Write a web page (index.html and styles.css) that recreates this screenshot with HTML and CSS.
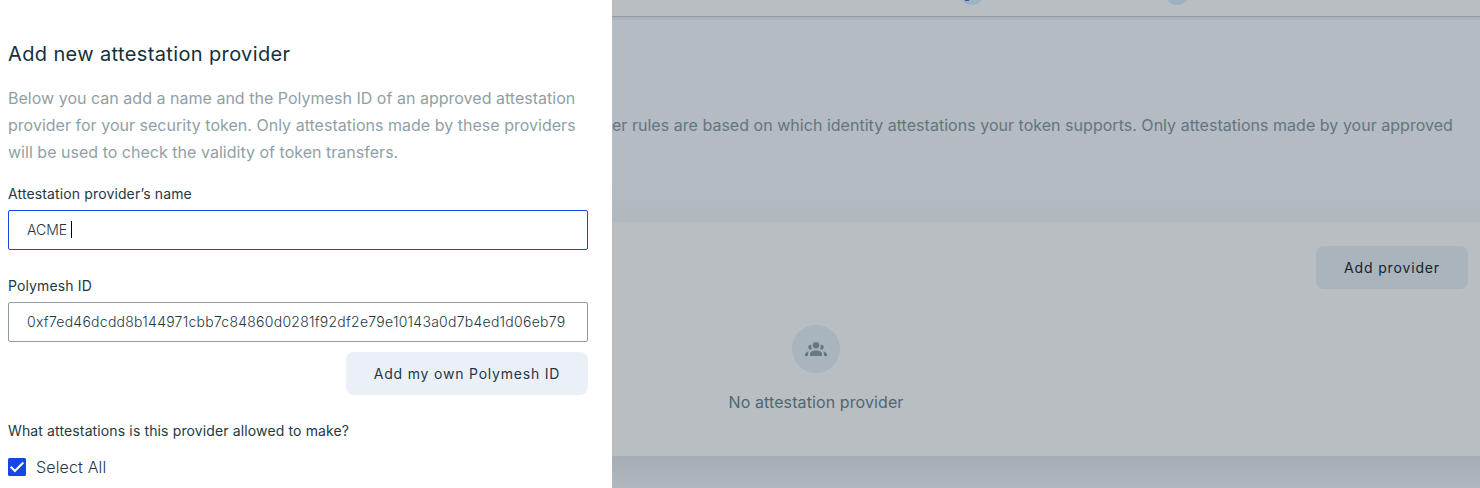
FILE: index.html
```html
<!DOCTYPE html>
<html lang="en">
<head>
<meta charset="utf-8">
<title>Add new attestation provider</title>
<link rel="stylesheet" href="styles.css">
</head>
<body>
<div class="screen">
  <aside class="drawer">
    <h1 class="title">Add new attestation provider</h1>
    <p class="intro">Below you can add a name and the Polymesh ID of an approved attestation<br>provider for your security token. Only attestations made by these providers<br>will be used to check the validity of token transfers.</p>
    <label class="label">Attestation provider’s name</label>
    <div class="input input-focus"><span>ACME</span><i class="caret"></i></div>
    <label class="label label-id">Polymesh ID</label>
    <div class="input"><span class="hash">0xf7ed46dcdd8b144971cbb7c84860d0281f92df2e79e10143a0d7b4ed1d06eb79</span></div>
    <button class="button own-id"><span>Add my own Polymesh ID</span></button>
    <div class="label question">What attestations is this provider allowed to make?</div>
    <div class="option">
      <svg class="check" viewBox="0 0 18 18"><rect width="18" height="18" rx="1.5" fill="#1348e4"/><path d="M2.7 8.7 6.9 12.9 15.3 4.5" fill="none" stroke="#fff" stroke-width="2.1"/></svg>
      <span>Select All</span>
    </div>
  </aside>
  <main class="page">
    <header class="steps">
      <svg class="steps-art" viewBox="0 0 868 16"><circle cx="360" cy="-7" r="12" fill="#9fb2c1"/><rect x="353" y="0" width="4" height="1" fill="#2855c5"/><circle cx="565" cy="-7" r="12" fill="#9fb2c1"/></svg>
    </header>
    <section class="hero"><p class="rules">er rules are based on which identity attestations your token supports. Only attestations made by your approved</p></section>
    <section class="card">
      <button class="button add"><span>Add provider</span></button>
      <div class="empty">
        <div class="avatar"><svg class="people" viewBox="0 0 24 24"><circle cx="12" cy="8.3" r="3.2"/><path d="M6 19V17C6 14.8 8.6 13.6 12 13.6s6 1.2 6 3.4v2z"/><path d="M7.4 7.9A2.4 2.4 0 1 0 8.1 12.1 5 5 0 0 1 7.4 7.9ZM16.6 7.9A2.4 2.4 0 1 1 15.9 12.1 5 5 0 0 0 16.6 7.9ZM1 19V17.4C1 15.8 2.6 14.7 4.9 14.4A4.5 4.5 0 0 0 4 17V19ZM23 19V17.4C23 15.8 21.4 14.7 19.1 14.4A4.5 4.5 0 0 1 20 17V19Z"/></svg></div>
        <p class="empty-text">No attestation provider</p>
      </div>
    </section>
    <div class="shade"></div>
  </main>
</div>
</body>
</html>
```
FILE: styles.css
```css
* { box-sizing: border-box; }
body { margin: 0; font-family: Inter, sans-serif; color: #1e3844; }
h1, p { margin: 0; font-weight: 400; }
.screen { display: grid; grid-template-columns: 612px 868px; height: 488px; overflow: hidden; }
.drawer { background: #fff; padding: 39px 24px 0 8px; display: flex; flex-direction: column; }
.title { font-size: 20px; line-height: 30px; letter-spacing: 0.37px; color: #15303c; white-space: nowrap; }
.intro { margin-top: 16px; font-size: 16px; line-height: 27px; letter-spacing: 0.02px; color: #909fa7; white-space: nowrap; }
.label { display: block; margin-top: 17px; font-size: 14px; line-height: 22px; letter-spacing: 0.13px; white-space: nowrap; }
.label-id { margin-top: 25px; }
.input { display: flex; align-items: center; height: 40px; margin-top: 5px; padding: 0 18px 2px; border: 1px solid #8c9ba5; border-radius: 2px; font-size: 14px; font-weight: 300; white-space: nowrap; }
.input-focus { border-color: #1348e4; }
.hash { letter-spacing: 0.26px; }
.caret { width: 1px; height: 17px; margin: 1px 0 0 4px; background: #000; }
.button { display: block; height: 43px; padding: 0; border: 0; border-radius: 8px; background: #ebf0f7; color: #1e3844; font-family: inherit; font-size: 14px; font-weight: 400; letter-spacing: 0.8px; white-space: nowrap; }
.own-id { width: 242px; margin-top: 10px; align-self: flex-end; }
.question { margin-top: 25px; }
.option { display: flex; align-items: center; gap: 10px; margin-top: 13px; font-size: 16px; font-weight: 300; line-height: 24px; letter-spacing: 0.15px; }
.check { width: 18px; height: 18px; }
.page { background: #b4bbc3; overflow: hidden; }
.steps { height: 16px; background: #b8bec2; }
.steps-art { display: block; width: 868px; height: 16px; }
.hero { height: 206px; padding-top: 95px; border-top: 1px solid #8e9ba3; background: linear-gradient(#a7b0b6 0, #b4bbc3 4px, #b4bbc3 170px, #b0b8bf); }
.rules { font-size: 16px; line-height: 27px; letter-spacing: 0.027px; color: #65757d; white-space: nowrap; }
.card { height: 234px; padding: 24px 12px 0 0; background: #b8bec2; display: flex; flex-direction: column; align-items: flex-end; }
.add { width: 152px; background: #a9b4bd; color: #15242d; letter-spacing: 0.85px; }
.empty { display: flex; flex-direction: column; align-items: center; width: 100%; margin-top: 36px; padding-right: 448px; }
.avatar { display: flex; align-items: center; justify-content: center; width: 48px; height: 48px; border-radius: 50%; background: #a9b4bd; }
.people { width: 24px; height: 24px; fill: #677980; }
.empty-text { margin-top: 16px; font-size: 16px; line-height: 27px; letter-spacing: 0.1px; color: #506672; white-space: nowrap; }
.shade { height: 32px; background: linear-gradient(#a5aeb6, #afb8bd); }
```
